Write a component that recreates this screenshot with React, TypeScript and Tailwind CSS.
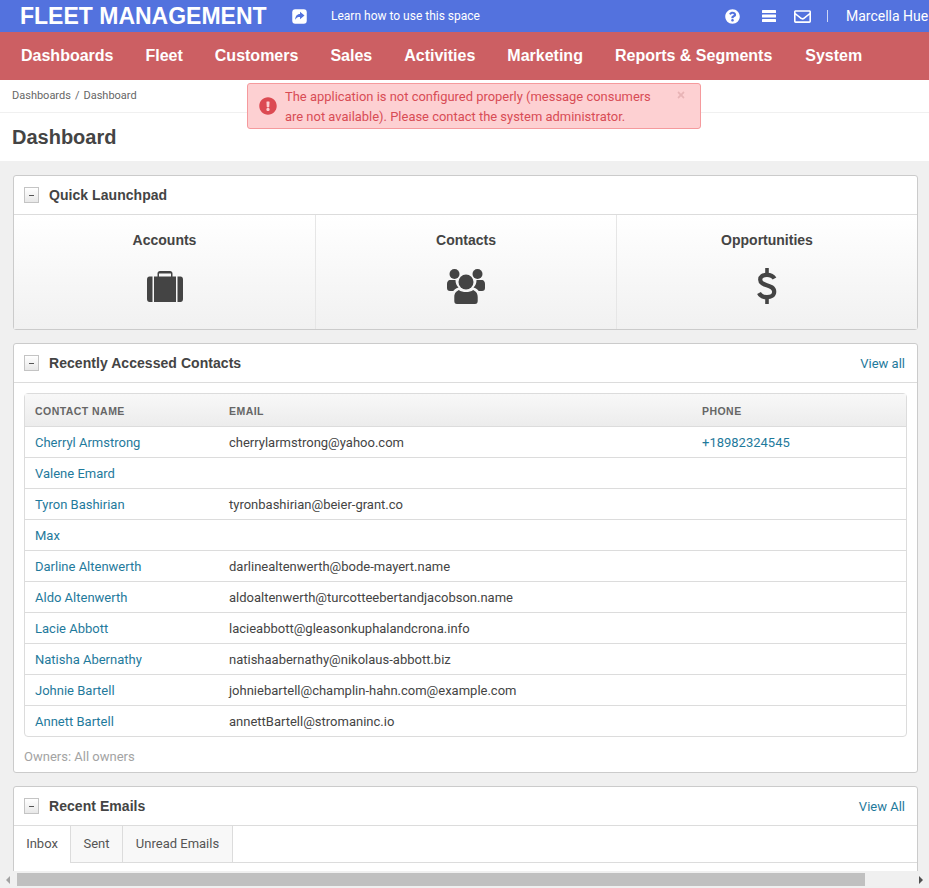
import { FaExclamationCircle, FaQuestionCircle, FaRegEnvelope, FaTimes } from 'react-icons/fa';

const navItems = ['Dashboards', 'Fleet', 'Customers', 'Sales', 'Activities', 'Marketing', 'Reports & Segments', 'System'];

const contacts = [
  { name: 'Cherryl Armstrong', email: 'cherrylarmstrong@yahoo.com', phone: '+18982324545' },
  { name: 'Valene Emard', email: '', phone: '' },
  { name: 'Tyron Bashirian', email: 'tyronbashirian@beier-grant.co', phone: '' },
  { name: 'Max', email: '', phone: '' },
  { name: 'Darline Altenwerth', email: 'darlinealtenwerth@bode-mayert.name', phone: '' },
  { name: 'Aldo Altenwerth', email: 'aldoaltenwerth@turcotteebertandjacobson.name', phone: '' },
  { name: 'Lacie Abbott', email: 'lacieabbott@gleasonkuphalandcrona.info', phone: '' },
  { name: 'Natisha Abernathy', email: 'natishaabernathy@nikolaus-abbott.biz', phone: '' },
  { name: 'Johnie Bartell', email: 'johniebartell@champlin-hahn.com@example.com', phone: '' },
  { name: 'Annett Bartell', email: 'annettBartell@stromaninc.io', phone: '' },
];

const ShareIcon = () => (
  <svg width="15" height="15" viewBox="0 0 15 15">
    <rect width="14.500" height="14.500" x="0.250" y="0.250" rx="3" fill="#fff" />
    <path d="M8 2.800 12.500 6.500 8 10.200V8C5.800 8 4.300 8.500 3.200 10.800 3.200 7.300 5 5 8 5z" fill="#5372de" />
  </svg>
);

const BarsIcon = () => (
  <svg width="14" height="12" viewBox="0 0 14 12" fill="#fff">
    <rect width="14" height="3" rx="0.500" />
    <rect y="4.500" width="14" height="3" rx="0.500" />
    <rect y="9" width="14" height="3" rx="0.500" />
  </svg>
);

const SuitcaseIcon = () => (
  <svg width="36" height="31" viewBox="0 0 36 31" fill="#444">
    <path d="M0 8.500C0 6.500 1 5.500 2.500 5.500H5.500V31H2.500C1 31 0 30 0 28z" />
    <path d="M36 8.500C36 6.500 35 5.500 33.500 5.500H30.500V31H33.500C35 31 36 30 36 28z" />
    <path fillRule="evenodd" d="M7 5.500H10.500V2.500C10.500 1 11.500 0 13 0H23C24.500 0 25.500 1 25.500 2.500V5.500H29V31H7zM12 2.500V5.500H24V2.500z" />
  </svg>
);

const UsersIcon = () => (
  <svg width="38" height="35" viewBox="0 0 38 35" fill="#444">
    <circle cx="7.500" cy="5" r="5" />
    <circle cx="30.500" cy="5" r="5" />
    <path d="M2.500 11H8.500C8.500 14 9.500 17 11.500 18.500 8.500 19.500 6.800 21 6.300 22H3C1 22 0 21 0 19V15C0 13 1 11.500 2.500 11z" />
    <path d="M35.500 11H29.500C29.500 14 28.500 17 26.500 18.500 29.500 19.500 31.200 21 31.700 22H35C37 22 38 21 38 19V15C38 13 37 11.500 35.500 11z" />
    <circle cx="19" cy="13" r="7.500" />
    <path d="M11 21C13 22.500 16 23 19 23S25 22.500 27 21C29 22 32 23.500 32 28V32C32 34 31 35 29 35H9C7 35 6 34 6 32V28C6 23.500 9 22 11 21z" transform="translate(1.900 0) scale(0.9 1)" />
  </svg>
);

const DollarIcon = () => (
  <svg width="20" height="36" viewBox="0 0 20 36" fill="none" stroke="#444">
    <path d="M17.500 10.500C16 7.800 13 6.800 10 6.800 6 6.800 3.200 8.500 3.200 11.800 3.200 18.800 17.200 15.500 17.200 23.800 17.200 27.500 14 29.200 10 29.200 6.500 29.200 3.500 28 2 25" strokeWidth="4.200" />
    <path d="M10 0V7M10 29V36" strokeWidth="3.600" />
  </svg>
);

const Collapse = () => (
  <span className="mr-[10px] flex h-[16px] w-[15px] items-center justify-center border border-[#c4c4c4] bg-gradient-to-b from-white to-[#e8e8e8]">
    <span className="h-px w-[5px] bg-[#555]" />
  </span>
);

const CardHeader = ({ title, link }: { title: string; link?: string }) => (
  <div className="flex h-[39px] items-center border-b border-[#dcdcdc] pl-[10px] pr-[12px]">
    <Collapse />
    <h3 className="flex-1 font-['Liberation_Sans',sans-serif] text-[14px] font-bold tracking-[0.05px] text-[#444]">{title}</h3>
    {link && <a className="pt-[1px] text-[13px] text-[#1f7a9c]">{link}</a>}
  </div>
);

const launchpad = [
  { label: 'Accounts', icon: <SuitcaseIcon /> },
  { label: 'Contacts', icon: <UsersIcon /> },
  { label: 'Opportunities', icon: <DollarIcon /> },
];

export default function App() {
  return (
    <div className="relative h-[888px] w-[929px] overflow-hidden bg-[#f0f0f0] font-['Roboto',sans-serif] text-[14px] text-[#444]">
      {/* Top bar */}
      <header className="flex h-[32px] items-center bg-[#5372de] pl-[20px] text-white">
        <span className="w-[272px] font-['Liberation_Sans',sans-serif] text-[23px] font-bold leading-[32px]">FLEET MANAGEMENT</span>
        <ShareIcon />
        <span className="ml-[24px] text-[12px]">Learn how to use this space</span>
        <div className="ml-auto flex items-center">
          <FaQuestionCircle size={15} />
          <span className="ml-[22px]"><BarsIcon /></span>
          <FaRegEnvelope size={17} className="ml-[18px]" />
          <span className="ml-[16px] h-[12px] w-px bg-[#cdd6f5]" />
          <span className="ml-[18px] w-[83px] whitespace-nowrap text-[14px]">Marcella Hue</span>
        </div>
      </header>

      {/* Main menu */}
      <nav className="flex h-[48px] items-center gap-[32px] bg-[#cc5f63] pl-[21px] font-['Liberation_Sans',sans-serif] text-[16px] font-bold text-white">
        {navItems.map((item) => (
          <a key={item} className="whitespace-nowrap last:ml-[1px]">{item}</a>
        ))}
      </nav>

      {/* Page head */}
      <div className="bg-white">
        <div className="flex h-[33px] items-center gap-[4px] border-b border-[#f0f0f0] pl-[12px] text-[11px] text-[#666]">
          <span>Dashboards</span><span>/</span><span>Dashboard</span>
        </div>
        <h1 className="flex h-[48px] items-center pl-[12px] font-['Liberation_Sans',sans-serif] text-[20px] font-bold text-[#444]">Dashboard</h1>
      </div>

      {/* Flash message */}
      <div className="absolute left-[247px] top-[83px] flex h-[46px] w-[454px] rounded-[3px] border border-[#f59a9d] bg-[#fdd0d2] text-[#d84c55]">
        <FaExclamationCircle size={18} className="ml-[11px] mt-[13px] shrink-0 text-[#dc4a52]" />
        <p className="ml-[8px] mt-[3px] w-[380px] shrink-0 text-[12.95px] leading-[20px]">
          The application is not configured properly (message consumers are not available). Please contact the system administrator.
        </p>
        <FaTimes size={10} className="ml-[11px] mt-[6px] shrink-0 text-[#e8b4b6]" />
      </div>

      <main className="flex flex-col gap-[13px] pl-[13px] pr-[11px] pt-[14px]">
        {/* Quick launchpad */}
        <section className="rounded-[3px] border border-[#cbcbcb] bg-white">
          <CardHeader title="Quick Launchpad" />
          <div className="grid h-[114px] grid-cols-3 bg-gradient-to-b from-white to-[#f1f1f1]">
            {launchpad.map((item, i) => (
              <div key={item.label} className={`flex flex-col items-center pt-[17px] ${i > 0 ? 'border-l border-[#e6e6e6]' : ''}`}>
                <span className="font-['Liberation_Sans',sans-serif] text-[14px] font-bold leading-[16px] text-[#444]">{item.label}</span>
                <div className="mt-[20px] flex h-[36px] items-center">{item.icon}</div>
              </div>
            ))}
          </div>
        </section>

        {/* Contacts */}
        <section className="rounded-[3px] border border-[#cbcbcb] bg-white">
          <CardHeader title="Recently Accessed Contacts" link="View all" />
          <div className="px-[10px] pt-[10px]">
            <table className="w-[883px] table-fixed border-separate border-spacing-0 rounded-[4px] border border-[#dcdcdc]">
              <thead>
                <tr className="h-[33px] bg-gradient-to-b from-[#f8f8f8] to-[#ececec] text-left font-['Liberation_Sans',sans-serif] text-[10.5px] font-bold tracking-[0.45px] text-[#666]">
                  <th className="w-[204px] border-b border-[#dcdcdc] pl-[10px] pt-[3px]">CONTACT NAME</th>
                  <th className="w-[473px] border-b border-[#dcdcdc] pt-[3px]">EMAIL</th>
                  <th className="border-b border-[#dcdcdc] pt-[3px]">PHONE</th>
                </tr>
              </thead>
              <tbody>
                {contacts.map((c, i) => {
                  const last = i === contacts.length - 1;
                  return (
                    <tr key={c.name} className={`text-[13px] ${last ? 'h-[30px]' : 'h-[31px]'}`}>
                      <td className={`pl-[10px] pt-[1px] text-[#1f7a9c] ${last ? '' : 'border-b border-[#dcdcdc]'}`}>{c.name}</td>
                      <td className={`pt-[1px] text-[#444] ${last ? '' : 'border-b border-[#dcdcdc]'}`}>{c.email}</td>
                      <td className={`pt-[1px] text-[#1f7a9c] ${last ? '' : 'border-b border-[#dcdcdc]'}`}>{c.phone}</td>
                    </tr>
                  );
                })}
              </tbody>
            </table>
          </div>
          <p className="flex h-[35px] items-center pl-[10px] pt-[5px] text-[13px] text-[#a3a3a3]">Owners: All owners</p>
        </section>

        {/* Recent emails */}
        <section className="rounded-[3px] border border-[#cbcbcb] bg-white">
          <CardHeader title="Recent Emails" link="View All" />
          <div className="flex h-[37px] border-b border-[#dcdcdc] text-[13px] text-[#555]">
            <span className="-mb-px flex w-[57px] items-center justify-center border-r border-[#dcdcdc] bg-white pb-[2px]">Inbox</span>
            <span className="flex w-[52px] items-center justify-center border-r border-[#dcdcdc] bg-[#f8f8f8] pb-[1px]">Sent</span>
            <span className="flex w-[110px] items-center justify-center border-r border-[#dcdcdc] bg-[#f8f8f8] pb-[1px]">Unread Emails</span>
          </div>
          <div className="h-[60px]" />
        </section>
      </main>

      {/* Horizontal scrollbar */}
      <div className="absolute bottom-0 left-0 flex h-[17px] w-[929px] items-center bg-[#f0f0f0]">
        <span className="ml-[6px] h-0 w-0 border-y-[4px] border-r-[4px] border-y-transparent border-r-[#a3a3a3]" />
        <span className="ml-[7px] h-[13px] w-[848px] bg-[#c0c0c0]" />
        <span className="ml-[54px] h-0 w-0 border-y-[4px] border-l-[4px] border-y-transparent border-l-[#505050]" />
      </div>
    </div>
  );
}
